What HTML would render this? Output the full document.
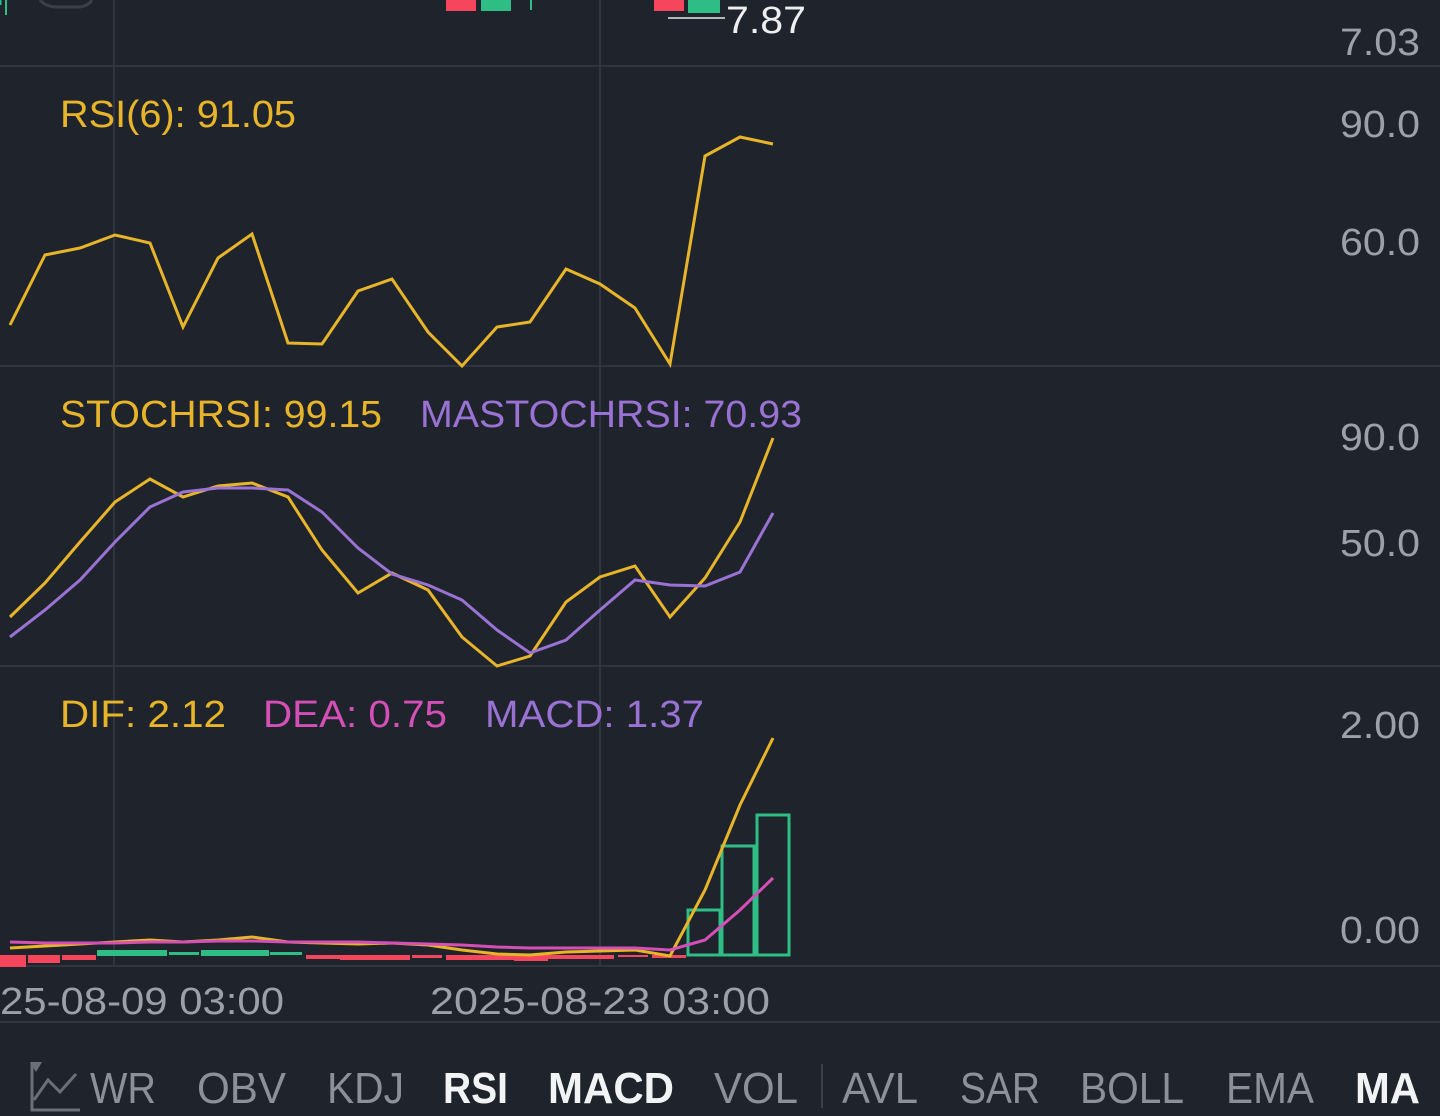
<!DOCTYPE html>
<html><head><meta charset="utf-8"><style>
html,body{margin:0;padding:0;background:#1f242c;}
svg{display:block}
text{font-family:"Liberation Sans",sans-serif;}
</style></head><body>
<svg width="1440" height="1116" viewBox="0 0 1440 1116" xmlns="http://www.w3.org/2000/svg">
<rect width="1440" height="1116" fill="#1f242c"/>
<g stroke="#353b45" stroke-width="1.5">
<line x1="0" y1="66" x2="1440" y2="66"/><line x1="0" y1="366" x2="1440" y2="366"/>
<line x1="0" y1="666" x2="1440" y2="666"/><line x1="0" y1="966" x2="1440" y2="966"/>
<line x1="0" y1="1022" x2="1440" y2="1022"/>
<line x1="114" y1="0" x2="114" y2="966"/><line x1="600" y1="0" x2="600" y2="966"/>
</g>
<rect x="446" y="0" width="30" height="11" fill="#f6465d"/><rect x="481" y="0" width="30" height="11" fill="#2ebd85"/>
<line x1="531" y1="0" x2="531" y2="10" stroke="#2ebd85" stroke-width="2"/>
<rect x="654" y="0" width="30" height="11" fill="#f6465d"/><rect x="688" y="0" width="32" height="13" fill="#2ebd85"/>
<line x1="0" y1="0" x2="0" y2="5" stroke="#2ebd85" stroke-width="3"/>
<line x1="6" y1="0" x2="6" y2="15" stroke="#2ebd85" stroke-width="2"/>
<path d="M40 0 Q45 6 55 7 L80 7 Q88 6 92 0" fill="none" stroke="#3a4049" stroke-width="3"/>
<line x1="668" y1="18" x2="725" y2="18" stroke="#e6e8ea" stroke-width="1.5"/>
<text x="726" y="33" font-size="38" fill="#eceef0" textLength="80" lengthAdjust="spacingAndGlyphs">7.87</text>
<g font-size="38" fill="#9aa1aa">
<text x="1340" y="55" textLength="80" lengthAdjust="spacingAndGlyphs">7.03</text>
<text x="1340" y="137" textLength="80" lengthAdjust="spacingAndGlyphs">90.0</text>
<text x="1340" y="255" textLength="80" lengthAdjust="spacingAndGlyphs">60.0</text>
<text x="1340" y="450" textLength="80" lengthAdjust="spacingAndGlyphs">90.0</text>
<text x="1340" y="556" textLength="80" lengthAdjust="spacingAndGlyphs">50.0</text>
<text x="1340" y="738" textLength="80" lengthAdjust="spacingAndGlyphs">2.00</text>
<text x="1340" y="943" textLength="80" lengthAdjust="spacingAndGlyphs">0.00</text>
</g>
<g font-size="38" lengthAdjust="spacingAndGlyphs">
<text x="60" y="127" fill="#e8b52a" textLength="236" lengthAdjust="spacingAndGlyphs">RSI(6): 91.05</text>
<text x="60" y="427" fill="#e8b52a" textLength="322" lengthAdjust="spacingAndGlyphs">STOCHRSI: 99.15</text>
<text x="420" y="427" fill="#9a72d4" textLength="382" lengthAdjust="spacingAndGlyphs">MASTOCHRSI: 70.93</text>
<text x="60" y="727" fill="#e8b52a" textLength="166" lengthAdjust="spacingAndGlyphs">DIF: 2.12</text>
<text x="263" y="727" fill="#d44fb6" textLength="184" lengthAdjust="spacingAndGlyphs">DEA: 0.75</text>
<text x="485" y="727" fill="#9a72d4" textLength="219" lengthAdjust="spacingAndGlyphs">MACD: 1.37</text>
</g>
<polyline fill="none" stroke="#e8b52a" stroke-width="3" points="10,325 45,255 80,248 115,235 150,243 183,327 218,258 252,234 288,343 322,344 358,291 392,279 428,332 462,366 497,327 530,322 566,269 600,284 635,308 670,364 705,156 740,137 773,144"/>
<polyline fill="none" stroke="#e8b52a" stroke-width="3" points="10,617 45,583 80,542 115,502 150,479 183,497 218,486 252,483 288,497 322,550 358,593 392,573 428,590 462,637 497,666 530,656 566,602 600,577 635,566 670,617 705,578 740,522 773,438"/>
<polyline fill="none" stroke="#9a72d4" stroke-width="3" points="10,637 45,610 80,580 115,542 150,507 183,492 218,488 252,488 288,490 322,512 358,548 392,574 428,585 462,600 497,630 530,653 566,640 600,610 635,580 670,585 705,586 740,572 773,513"/>
<g fill="#f6465d"><rect x="0" y="955" width="26" height="12"/><rect x="28" y="955" width="32" height="8"/><rect x="62" y="955" width="34" height="5"/>
<rect x="306" y="955" width="34" height="4"/><rect x="340" y="955" width="70" height="5"/><rect x="412" y="955" width="30" height="3"/><rect x="446" y="955" width="34" height="5"/><rect x="480" y="955" width="34" height="5"/><rect x="514" y="955" width="34" height="6"/><rect x="548" y="955" width="66" height="4"/><rect x="618" y="955" width="30" height="2"/><rect x="652" y="955" width="34" height="3"/></g>
<g fill="#2ebd85"><rect x="97" y="950" width="70" height="6"/><rect x="169" y="952" width="30" height="3"/><rect x="201" y="950" width="68" height="6"/><rect x="270" y="952" width="32" height="3"/></g>
<g fill="none" stroke="#2ebd85" stroke-width="3"><rect x="688" y="910" width="32" height="45"/><rect x="722" y="846" width="32" height="109"/><rect x="757" y="815" width="32" height="140"/></g>
<polyline fill="none" stroke="#e8b52a" stroke-width="3" points="10,948 45,946 80,944 115,942 150,940 183,942 218,940 252,937 288,942 322,943 358,944 392,943 428,945 462,950 497,954 530,955 566,952 600,951 635,950 670,956 705,890 740,805 773,738"/>
<polyline fill="none" stroke="#d44fb6" stroke-width="3" points="10,942 45,943 80,943 115,943 150,942 183,942 218,941 252,941 288,942 322,942 358,942 392,943 428,944 462,945 497,947 530,948 566,948 600,948 635,948 670,950 705,940 740,910 773,878"/>
<g font-size="38" fill="#9aa1aa"><text x="0" y="1014" textLength="284" lengthAdjust="spacingAndGlyphs">25-08-09 03:00</text><text x="430" y="1014" textLength="340" lengthAdjust="spacingAndGlyphs">2025-08-23 03:00</text></g>
<g fill="none" stroke="#6a707a" stroke-width="3"><polyline points="32,1062 32,1110 80,1110"/><polyline points="34,1100 48,1080 60,1092 76,1074"/></g>
<path d="M30 1062 L42 1062 L36 1072 Z" fill="#6a707a"/>
<g font-size="44" fill="#8a919b">
<text x="90" y="1103" textLength="66" lengthAdjust="spacingAndGlyphs">WR</text>
<text x="197" y="1103" textLength="89" lengthAdjust="spacingAndGlyphs">OBV</text>
<text x="327" y="1103" textLength="77" lengthAdjust="spacingAndGlyphs">KDJ</text>
<text x="714" y="1103" textLength="84" lengthAdjust="spacingAndGlyphs">VOL</text>
<text x="842" y="1103" textLength="76" lengthAdjust="spacingAndGlyphs">AVL</text>
<text x="960" y="1103" textLength="80" lengthAdjust="spacingAndGlyphs">SAR</text>
<text x="1080" y="1103" textLength="104" lengthAdjust="spacingAndGlyphs">BOLL</text>
<text x="1226" y="1103" textLength="88" lengthAdjust="spacingAndGlyphs">EMA</text>
</g>
<line x1="822" y1="1064" x2="822" y2="1108" stroke="#3a4049" stroke-width="2"/>
<g font-size="44" fill="#f2f3f5" font-weight="bold">
<text x="443" y="1103" textLength="65" lengthAdjust="spacingAndGlyphs">RSI</text>
<text x="548" y="1103" textLength="126" lengthAdjust="spacingAndGlyphs">MACD</text>
<text x="1355" y="1103" textLength="65" lengthAdjust="spacingAndGlyphs">MA</text>
</g>
</svg>
</body></html>
